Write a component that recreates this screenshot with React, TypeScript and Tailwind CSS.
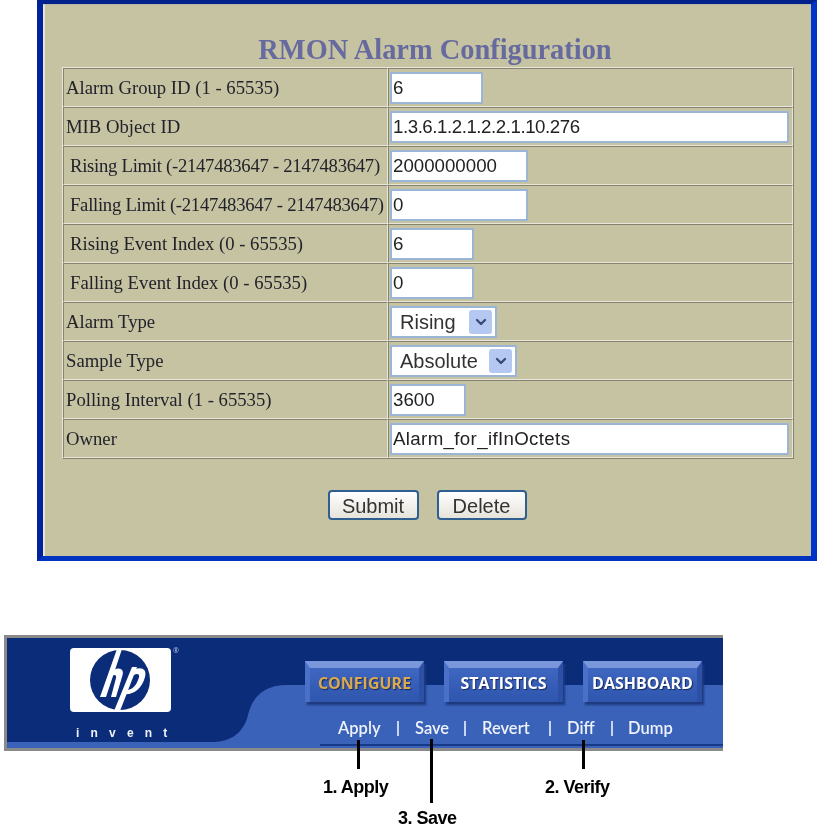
import { ChevronDown } from 'lucide-react'

const rows = [
  { label: 'Alarm Group ID (1 - 65535)', value: '6', box: 'w-[93px]', labelClass: 'pl-[2px]' },
  { label: 'MIB Object ID', value: '1.3.6.1.2.1.2.2.1.10.276', box: 'w-[399px] tracking-[-0.45px]', labelClass: 'pl-[2px]' },
  { label: 'Rising Limit (-2147483647 - 2147483647)', value: '2000000000', box: 'w-[138px]', labelClass: 'pl-[6px] tracking-[-0.28px]' },
  { label: 'Falling Limit (-2147483647 - 2147483647)', value: '0', box: 'w-[138px]', labelClass: 'pl-[6px] tracking-[-0.28px]' },
  { label: 'Rising Event Index (0 - 65535)', value: '6', box: 'w-[84px]', labelClass: 'pl-[6px]' },
  { label: 'Falling Event Index (0 - 65535)', value: '0', box: 'w-[84px]', labelClass: 'pl-[6px]' },
  { label: 'Alarm Type', select: 'Rising', box: 'w-[107px]', labelClass: 'pl-[2px]' },
  { label: 'Sample Type', select: 'Absolute', box: 'w-[127px]', labelClass: 'pl-[2px]' },
  { label: 'Polling Interval (1 - 65535)', value: '3600', box: 'w-[76px]', labelClass: 'pl-[2px]' },
  { label: 'Owner', value: 'Alarm_for_ifInOctets', box: 'w-[399px] tracking-[0.35px]', labelClass: 'pl-[2px]' },
]

function NavButton({ label, active }: { label: string; active?: boolean }) {
  return (
    <div className="w-[119px] h-[41px] flex items-center justify-center border-t-[7px] border-l-[5px] border-r-[5px] border-t-[#7b97dc] border-l-[#4a70c8] border-r-[#2c50a6] bg-gradient-to-b from-[#3f66c0] to-[#2f56ae] shadow-[2px_3px_2px_#1d3a80]">
      <span
        className={`text-[16px] font-bold font-['Open_Sans',sans-serif] -mt-[5px] whitespace-nowrap [text-shadow:1px_1px_1px_#14285c] ${active ? 'text-[#dba94e]' : 'text-white'}`}
      >
        {label}
      </span>
    </div>
  )
}

function Sep() {
  return <span className="w-[2px] h-[15px] bg-[#c9d5f0]" />
}

export default function App() {
  return (
    <div className="w-[820px] h-[839px] bg-white overflow-hidden blur-[0.4px]">
      {/* Alarm form */}
      <div className="ml-[37px] w-[780px] h-[561px] border-l-[6px] border-r-[6px] border-t-[4px] border-b-[5px] border-l-[#00229a] border-r-[#0035c8] border-t-[#00208c] border-b-[#0034c0] bg-[#c6c3a3]">
        <div className="h-full border-l-2 border-t border-l-[#e6e4d6] border-t-[#b8b8a8] pl-[17px] pr-[18px]">
          <h1 className="pt-[30px] pl-[15px] h-[62px] text-center text-[28.4px] leading-[30px] font-bold text-[#666a9e] font-['Liberation_Serif',serif]">
            RMON Alarm Configuration
          </h1>
          <table className="w-[732px] table-fixed border-separate border-spacing-0 border-t border-l border-r border-b border-t-[#e8e6da] border-l-[#e8e6da] border-r-[#85826e] border-b-[#85826e]">
            <tbody>
              {rows.map((row) => (
                <tr key={row.label}>
                  <td className="w-[325px] h-[39px] p-0 pt-[2px] border border-t-[#85826e] border-l-[#85826e] border-b-[#e8e6da] border-r-[#e8e6da] font-['Liberation_Serif',serif] text-[18.7px] text-[#22222a] whitespace-nowrap">
                    <span className={row.labelClass}>{row.label}</span>
                  </td>
                  <td className="h-[39px] p-0 pl-[1px] border border-t-[#85826e] border-l-[#85826e] border-b-[#e8e6da] border-r-[#e8e6da]">
                    {row.select ? (
                      <div className={`${row.box} h-[32px] flex items-center justify-between pl-[8px] pr-[3px] bg-white border-2 border-[#9ab5d6] text-[20px] text-[#333] font-['Liberation_Sans',sans-serif]`}>
                        <span>{row.select}</span>
                        <span className="w-[23px] h-[24px] flex items-center justify-center rounded-[3px] bg-[#b4c8f2]">
                          <ChevronDown size={16} strokeWidth={3.5} className="text-[#3a4a78]" />
                        </span>
                      </div>
                    ) : (
                      <input
                        readOnly
                        value={row.value}
                        className={`${row.box} block h-[32px] px-[1px] bg-white border-2 border-[#9ab5d6] text-[18.7px] text-[#222] font-['Liberation_Sans',sans-serif] outline-none`}
                      />
                    )}
                  </td>
                </tr>
              ))}
            </tbody>
          </table>
          <div className="flex justify-center gap-[18px] mt-[31px] pr-[1px]">
            <button className="w-[91px] h-[30px] pt-[1px] rounded-[4px] border-2 border-[#2f5f90] bg-gradient-to-b from-white to-[#e6e3da] text-[20px] leading-[24px] text-[#333] font-['Liberation_Sans',sans-serif]">
              Submit
            </button>
            <button className="w-[90px] h-[30px] pt-[1px] rounded-[4px] border-2 border-[#2f5f90] bg-gradient-to-b from-white to-[#e6e3da] text-[20px] leading-[24px] text-[#333] font-['Liberation_Sans',sans-serif]">
              Delete
            </button>
          </div>
        </div>
      </div>

      {/* Banner with callouts */}
      <div className="relative ml-[4px] mt-[74px] w-[719px] h-[116px] border-t-[3px] border-l-[3px] border-b-[3px] border-[#8a8a8a] bg-[#0b2c78]">
        <svg className="absolute inset-0" width="716" height="110" viewBox="0 0 716 110">
          <path d="M0 104 L206 104 C228 104 238 90 241 77 C245 60 256 47 280 47 L716 47 L716 110 L0 110 Z" fill="#3a62b8" />
          <path d="M313 107 L716 107" stroke="#0b2c78" strokeWidth="1.5" />
        </svg>
        <div className="relative flex h-full">
          <div className="w-[298px] pl-[63px] pt-[9px]">
            <div className="relative">
              <svg width="104" height="66" viewBox="0 0 104 66">
                <rect x="0" y="1" width="101" height="64" rx="4" fill="#fff" />
                <circle cx="50" cy="33" r="30" fill="#0b2c78" />
                <path d="M47 2 L52 2 L36 50 L30 50 Z" fill="#fff" />
                <path d="M62 20 L67 20 L50 64 L44 64 Z" fill="#fff" />
                <path d="M40 26 C46 19 56 20 52 30 L46 50 L41 50 L46 31 C47 27 43 27 39 31 Z" fill="#fff" />
                <path d="M60 26 C66 19 78 19 75 30 C72 42 62 49 53 47 L55 43 C62 44 67 38 69 30 C70 26 65 26 60 31 Z" fill="#fff" />
              </svg>
              <span className="absolute left-[103px] top-0 text-[7px] leading-[8px] text-[#b6c4e6]">®</span>
            </div>
            <div className="mt-[13px] pl-[6px] text-[12px] leading-[14px] font-bold tracking-[11.2px] text-[#eef2fb] font-['Liberation_Sans',sans-serif]">
              invent
            </div>
          </div>
          <div className="flex flex-col">
            <div className="flex gap-[20px] pt-[23px]">
              <NavButton label="CONFIGURE" active />
              <NavButton label="STATISTICS" />
              <NavButton label="DASHBOARD" />
            </div>
            <div className="flex items-center pl-[33px] mt-[15px] h-[22px] text-[16.5px] font-semibold text-[#eef2fb] font-['Lato',sans-serif]">
              <span className="w-[43px]">Apply</span>
              <span className="w-[34px] flex justify-center"><Sep /></span>
              <span className="w-[33px]">Save</span>
              <span className="w-[34px] flex justify-center"><Sep /></span>
              <span className="w-[51px]">Revert</span>
              <span className="w-[34px] flex justify-center"><Sep /></span>
              <span className="w-[28px]">Diff</span>
              <span className="w-[33px] flex justify-center"><Sep /></span>
              <span>Dump</span>
            </div>
          </div>
        </div>

        {/* Leader lines and their labels */}
        <span className="absolute left-[350px] top-[102px] w-[3px] h-[29px] bg-black" />
        <span className="absolute left-[423px] top-[101px] w-[3px] h-[64px] bg-black" />
        <span className="absolute left-[575px] top-[102px] w-[3px] h-[29px] bg-black" />
        <span className="absolute left-[316px] top-[139px] text-[18px] leading-[20px] font-bold text-black tracking-[-0.5px] font-['Liberation_Sans',sans-serif] whitespace-nowrap">1. Apply</span>
        <span className="absolute left-[391px] top-[170px] text-[18px] leading-[20px] font-bold text-black tracking-[-0.5px] font-['Liberation_Sans',sans-serif] whitespace-nowrap">3. Save</span>
        <span className="absolute left-[538px] top-[139px] text-[18px] leading-[20px] font-bold text-black tracking-[-0.5px] font-['Liberation_Sans',sans-serif] whitespace-nowrap">2. Verify</span>
      </div>
    </div>
  )
}
